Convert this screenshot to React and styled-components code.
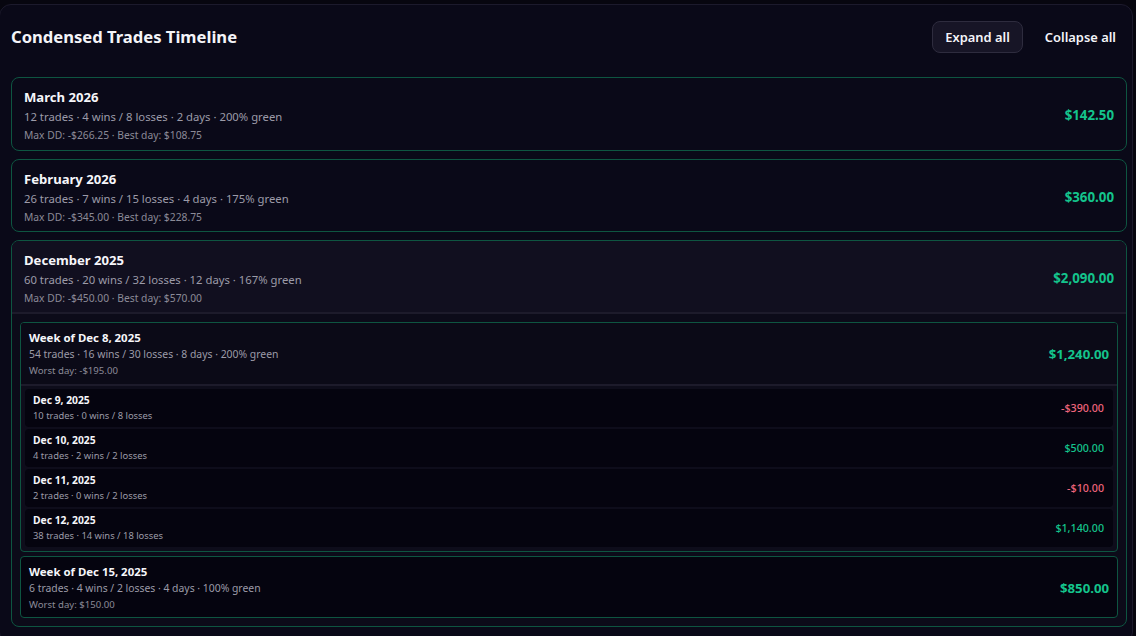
import React, {useState} from 'react';
import styled, {createGlobalStyle} from 'styled-components';

const GlobalStyle = createGlobalStyle`
    html, body {
        margin: 0;
        padding: 0;
        background: #07060f;
        font-family: "Segoe UI", "Noto Sans", "Open Sans", sans-serif;
        color: #f4f4f8;
        overflow: hidden;
    }
`

const Panel = styled.section`
    margin: 4px 3px 0 -1px;
    min-height: 640px;
    box-sizing: border-box;
    background: #0a0918;
    border: 1px solid #1c1a2c;
    border-radius: 12px;
    padding: 16px 5px 12px 11px;
`

const Header = styled.div`
    display: flex;
    align-items: center;
    justify-content: space-between;
    margin-bottom: 24px;
`

const Title = styled.h2`
    margin: 0;
    font-size: 16.6px;
    font-weight: 700;
    line-height: 32px;
`

const Actions = styled.div`
    display: flex;
    gap: 9px;
    margin-right: -2px;
`

const Button = styled.button`
    font: inherit;
    font-size: 12.9px;
    font-weight: 600;
    color: #f4f4f8;
    height: 32px;
    padding: 0 12px;
    border-radius: 8px;
    cursor: pointer;
    background: ${p => p.$ghost ? 'transparent' : '#171526'};
    border: 1px solid ${p => p.$ghost ? 'transparent' : '#2e2c3e'};
`

const List = styled.div`
    display: flex;
    flex-direction: column;
    gap: ${p => p.$gap || 8}px;
`

const Card = styled.div`
    border: 1px solid #0e5541;
    border-radius: ${p => p.$radius || 8}px;
    overflow: hidden;
    background: ${p => p.$bg || '#0a0918'};
`

const Row = styled.div`
    display: flex;
    align-items: center;
    justify-content: space-between;
    padding: ${p => p.$pad};
    background: ${p => p.$bg || 'transparent'};
    border-bottom: ${p => p.$open ? '2px solid #1d1b2b' : 'none'};
    cursor: pointer;
`

const Info = styled.div`
    display: flex;
    flex-direction: column;
`

const Name = styled.div`
    font-size: ${p => p.$size}px;
    font-weight: 700;
    color: #f6f6fa;
    line-height: ${p => p.$lh}px;
`

const Meta = styled.div`
    font-size: ${p => p.$size}px;
    color: ${p => p.$dim ? '#8b8a97' : '#9c9ba8'};
    line-height: ${p => p.$lh}px;
`

const Amount = styled.div`
    font-size: ${p => p.$size}px;
    font-weight: ${p => p.$weight || 700};
    color: ${p => p.$neg ? '#f0647c' : '#14c48c'};
`

const Body = styled.div`
    padding: ${p => p.$pad};
`

const DayRow = styled.div`
    display: flex;
    align-items: center;
    justify-content: space-between;
    height: 38px;
    box-sizing: border-box;
    padding: 0 9px 0 8px;
    background: #05040f;
    border-radius: 4px;
`

const months = [
    {name: 'March 2026', meta: '12 trades · 4 wins / 8 losses · 2 days · 200% green', extra: 'Max DD: -$266.25 · Best day: $108.75', amount: '$142.50'},
    {name: 'February 2026', meta: '26 trades · 7 wins / 15 losses · 4 days · 175% green', extra: 'Max DD: -$345.00 · Best day: $228.75', amount: '$360.00'},
    {name: 'December 2025', meta: '60 trades · 20 wins / 32 losses · 12 days · 167% green', extra: 'Max DD: -$450.00 · Best day: $570.00', amount: '$2,090.00', weeks: [
        {name: 'Week of Dec 8, 2025', meta: '54 trades · 16 wins / 30 losses · 8 days · 200% green', extra: 'Worst day: -$195.00', amount: '$1,240.00', days: [
            {name: 'Dec 9, 2025', meta: '10 trades · 0 wins / 8 losses', amount: '-$390.00', neg: true},
            {name: 'Dec 10, 2025', meta: '4 trades · 2 wins / 2 losses', amount: '$500.00'},
            {name: 'Dec 11, 2025', meta: '2 trades · 0 wins / 2 losses', amount: '-$10.00', neg: true},
            {name: 'Dec 12, 2025', meta: '38 trades · 14 wins / 18 losses', amount: '$1,140.00'},
        ]},
        {name: 'Week of Dec 15, 2025', meta: '6 trades · 4 wins / 2 losses · 4 days · 100% green', extra: 'Worst day: $150.00', amount: '$850.00', days: [
            {name: 'Dec 15, 2025', meta: '6 trades · 4 wins / 2 losses', amount: '$850.00'},
        ]},
    ]},
]

const Week = ({week, open, toggle}) => (
    <Card $radius={4} $bg={open ? '#0e0d1b' : '#05040f'}>
        <Row $pad={open ? '6px 8px' : '6px 8px 5px'} $bg={open ? '#0b0a17' : 'transparent'} $open={open} onClick={toggle}>
            <Info>
                <Name $size={11.4} $lh={17}>{week.name}</Name>
                <Meta $size={10.4} $lh={17}>{week.meta}</Meta>
                <Meta $size={9.6} $lh={15} $dim>{week.extra}</Meta>
            </Info>
            <Amount $size={13.2}>{week.amount}</Amount>
        </Row>
        {open && (
            <Body $pad="3px 4px 4px">
                <List $gap={2}>
                    {week.days.map(d => (
                        <DayRow key={d.name}>
                            <Info>
                                <Name $size={10.3} $lh={16}>{d.name}</Name>
                                <Meta $size={9.4} $lh={16}>{d.meta}</Meta>
                            </Info>
                            <Amount $size={10.7} $weight={500} $neg={d.neg}>{d.amount}</Amount>
                        </DayRow>
                    ))}
                </List>
            </Body>
        )}
    </Card>
)

const Month = ({month, open, toggle, openWeeks, toggleWeek}) => (
    <Card $bg={open ? '#0c0b19' : '#0a0918'}>
        <Row $pad={open ? '9px 12px 6px' : '9px 12px 6.5px'} $bg={open ? '#110f1f' : 'transparent'} $open={open} onClick={toggle}>
            <Info>
                <Name $size={13.1} $lh={20}>{month.name}</Name>
                <Meta $size={11.3} $lh={20}>{month.meta}</Meta>
                <Meta $size={10.3} $lh={16} $dim>{month.extra}</Meta>
            </Info>
            <Amount $size={13.3}>{month.amount}</Amount>
        </Row>
        {open && month.weeks && (
            <Body $pad="8px">
                <List $gap={4}>
                    {month.weeks.map(w => (
                        <Week key={w.name} week={w} open={!!openWeeks[w.name]} toggle={() => toggleWeek(w.name)} />
                    ))}
                </List>
            </Body>
        )}
    </Card>
)

const App = () => {
    const [openMonths, setOpenMonths] = useState({'December 2025': true});
    const [openWeeks, setOpenWeeks] = useState({'Week of Dec 8, 2025': true});

    const expandAll = () => {
        const m = {}, w = {};
        months.forEach(mo => {
            m[mo.name] = true;
            (mo.weeks || []).forEach(we => { w[we.name] = true });
        });
        setOpenMonths(m);
        setOpenWeeks(w);
    }

    const collapseAll = () => {
        setOpenMonths({});
        setOpenWeeks({});
    }

    return (
        <>
            <GlobalStyle />
            <Panel>
                <Header>
                    <Title>Condensed Trades Timeline</Title>
                    <Actions>
                        <Button onClick={expandAll}>Expand all</Button>
                        <Button $ghost onClick={collapseAll}>Collapse all</Button>
                    </Actions>
                </Header>
                <List>
                    {months.map(m => (
                        <Month
                            key={m.name}
                            month={m}
                            open={!!openMonths[m.name]}
                            toggle={() => setOpenMonths(s => ({...s, [m.name]: !s[m.name]}))}
                            openWeeks={openWeeks}
                            toggleWeek={name => setOpenWeeks(s => ({...s, [name]: !s[name]}))}
                        />
                    ))}
                </List>
            </Panel>
        </>
    )
};

export default App;
